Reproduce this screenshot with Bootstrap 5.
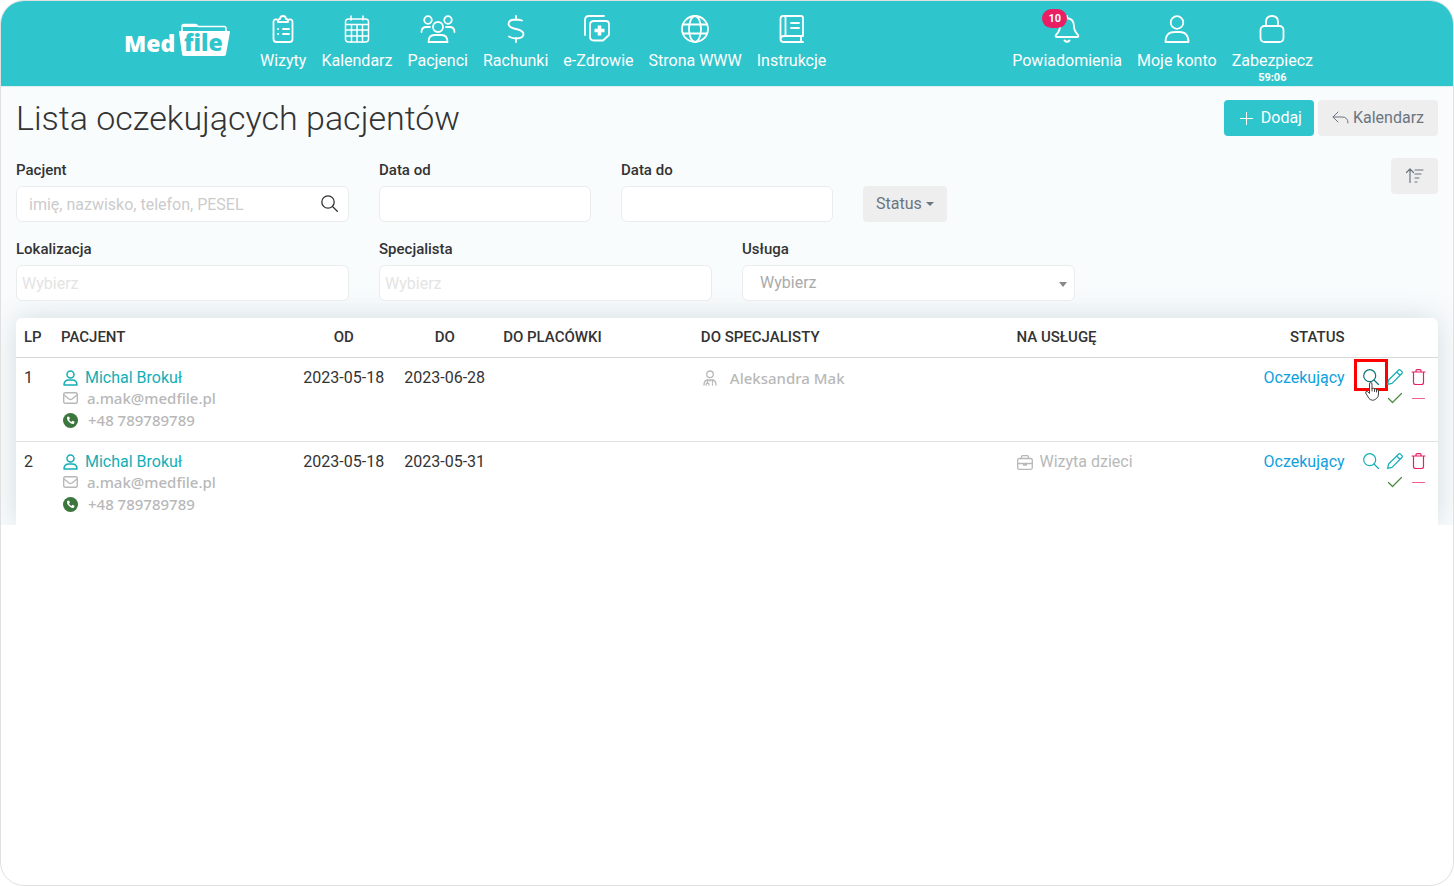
<!DOCTYPE html>
<html lang="pl">
<head>
<meta charset="utf-8">
<meta name="viewport" content="width=device-width, initial-scale=1">
<title>MedFile – Lista oczekujących pacjentów</title>
<link href="https://cdn.jsdelivr.net/npm/bootstrap@5.3.0/dist/css/bootstrap.min.css" rel="stylesheet">
<style>
  :root { --teal: #2fc5cd; --teal-dark: #14aeb6; }
  body { font-family: Roboto, "Liberation Sans", sans-serif; font-size: 16px; color: #333; background: #fff; }
  .frame { border: 1px solid #e0e0e0; border-radius: 24px; overflow: hidden; min-height: 100vh; background: #fff; }
  svg { fill: none; stroke: currentColor; stroke-linecap: round; stroke-linejoin: round; display: block; flex: none; }
  svg.solid { stroke: none; }

  .topbar { background: var(--teal); height: 85px; }
  .topbar-inner { max-width: 1206px; }
  .topbar .nav { column-gap: 15px; }
  .topbar .account { padding-right: 17px; }
  .topbar .nav-link { color: #fff; padding: 14px 0 0; line-height: 22px; text-align: center; position: relative; }
  .topbar .nav-link svg { width: 36px; height: 28px; margin: 0 auto 7px; stroke-width: 1.8; }
  .topbar .nav-link svg.fine { stroke-width: 1.5; }
  .brand { margin: 21px 30px 0 0; }
  .timer { font-size: 11px; font-weight: 700; line-height: 12px; }
  .count { position: absolute; left: 30px; top: 8px; width: 25px; height: 19px; line-height: 19px; font-size: 11px; font-weight: 700; padding: 0; background: #e91e63; border-radius: 10px; }

  .screen { background: #f9fcfd; border-top: 1px solid #e3eef0; padding-top: 13px; overflow: hidden; }
  .title-row { padding: 0 15px; margin-bottom: 22px; }
  h1 { font-size: 34px; font-weight: 300; line-height: 36px; margin: 0; color: #333; }
  .btn { font-size: 16px; height: 36px; border: 0; border-radius: 4px; display: inline-flex; align-items: center; }
  .btn-add { background: var(--teal) !important; color: #fff !important; padding: 0 12px 0 16px; gap: 8px; }
  .btn-soft { background: #eee !important; color: #6b7580 !important; padding: 0 14px; gap: 4px; }
  .btn-soft.dropdown-toggle { padding: 0 13px; }
  .filters { --bs-gutter-x: 30px; --bs-gutter-y: 15px; margin: -15px 0 0; }
  .form-label { font-size: 15px; font-weight: 500; line-height: 24px; margin: 0 0 4px; display: block; }
  .form-control, .form-select { height: 36px; font-size: 16px; border: 1px solid #eaeded; border-radius: 6px; padding: 0 12px; color: #aaa; background-color: #fff; }
  .form-control::placeholder { color: #ccc; opacity: 1; }
  .tags-box { padding: 0 5px; }
  .tags-box::placeholder { color: #e4e4e4; }
  .form-select { padding-left: 17px; background-image: none; }
  .select-caret, .find-icon { position: absolute; pointer-events: none; }
  .select-caret { right: 8px; top: 17px; border: 4px solid transparent; border-top: 5px solid #888; border-bottom: 0; }
  .find-icon { right: 11px; top: 9px; color: #333; }
  .btn.dropdown-toggle::after { border-width: 4px; border-bottom: 0; margin: 0; }

  .list-card { margin: 17px 15px 0; background: #fff; border-radius: 6px 6px 0 0; box-shadow: 0 0 30px rgba(60, 90, 100, .2); }
  .list-card table { table-layout: fixed; margin: 0; color: #333; --bs-table-bg: transparent; }
  .list-card th { font-size: 15px; font-weight: 500; line-height: 22px; padding: 8px 8px 9px; border-bottom: 1px solid #d8d8d8; white-space: nowrap; color: #333; }
  .list-card td { line-height: 24px; padding: 8px 8px 7px; border-bottom: 1px solid #e1e1e1; white-space: nowrap; color: #333; }
  .list-card tr:last-child td { border-bottom: 0; }
  .list-card a { text-decoration: none; color: var(--teal-dark); }
  .list-card .state { color: #109fe0; }
  .list-card .soft, .list-card a.soft { color: #b8b8b8; font-family: "Noto Sans", "Open Sans", sans-serif; font-size: 15px; font-weight: 500; }
  .list-card .soft-plain { color: #b8b8b8; }
  .contact { display: flex; align-items: center; gap: 7px; padding-left: 2px; height: 24px; }
  .contact.mail { height: 16px; gap: 9px; }
  .contact.phone { height: 28px; gap: 10px; }
  .contact.doctor { gap: 13px; }
  .contact.soft-plain { padding-left: 0; }
  .tools { display: grid; grid-template-columns: repeat(3, 16px); gap: 5px 8px; justify-content: end; padding: 3px 3px 0 0; }
  .tools button { border: 0; background: none; padding: 0; width: 16px; height: 16px; color: var(--teal-dark); position: relative; }
  .tools .danger { color: #e91e63; }
  .tools .accept { color: #4a8a3c; grid-column: 2; }
  .tools .pointed { color: #0d7377; }
  .marker { position: absolute; left: -9px; top: -10px; width: 34px; height: 32px; border: 3px solid #f00; }
  .hand { position: absolute; left: 2px; top: 13px; color: #444; }
</style>
</head>
<body>
<div class="frame">
  <header class="topbar">
    <nav class="topbar-inner mx-auto d-flex" aria-label="Główna nawigacja">
      <a class="brand" href="#" aria-label="MedFile">
        <svg class="solid" width="106" height="36" viewBox="0 0 106 36">
          <path d="M58 9V4.500q0-2 2-2h11q2 0 3 2h26q2 0 2 2v3" fill="none" stroke="#fff" stroke-width="1.500"/>
          <path d="M59 2h12l3 3H59z" fill="#fff"/>
          <path d="M55 9h50q1 0 1 1l-4 22q0 2-2 2H60q-2 0-2-2L55 10z" fill="#fff"/>
          <text x="0" y="30" fill="#fff" font-family="Open Sans" font-weight="800" font-size="23">Med</text>
          <text x="60" y="29" fill="#2fc5cd" font-family="Open Sans" font-weight="800" font-size="23">file</text>
        </svg>
      </a>
      <div class="nav flex-nowrap">
        <a class="nav-link" href="#"><svg viewBox="0 0 36 28"><path d="M11.500 4.500Q8.500 4 8.500 7v17q0 3 3 3h13q3 0 3-3V7q0-3-3-2.500M13 7V5.500q0-1.500 2-1.500 0-3 3-3t3 3q2 0 2 1.500V7zM18 14h6M18 19h6M13 14h.2M13 19h.2"/></svg>Wizyty</a>
        <a class="nav-link" href="#"><svg class="fine" viewBox="0 0 36 28"><rect x="6.500" y="4" width="23" height="23" rx="3"/><path d="M12 1v4M24 1v4M7 9.500h22M7 15h22M7 21h22M12.500 9.500V27M18 9.500V27M23.500 9.500V27"/></svg>Kalendarz</a>
        <a class="nav-link" href="#"><svg viewBox="0 0 36 28"><circle cx="18" cy="12" r="5"/><circle cx="8" cy="5" r="3.800"/><circle cx="28" cy="5" r="3.800"/><path d="M8.500 27q0-7 6-7h7q6 0 6 7zM1.500 17q0-5 5-5h3.500M34.500 17q0-5-5-5H26"/></svg>Pacjenci</a>
        <a class="nav-link" href="#"><svg viewBox="0 0 36 28"><path d="M18 1v4M18 23v4M24 5.500Q21 4.500 18 4.500c-5 0-7.500 2-7.500 4.500 0 3 3 4 7.500 5s7.500 2 7.500 5-3 4.500-7.500 4.500q-4 0-7-2"/></svg>Rachunki</a>
        <a class="nav-link" href="#"><svg viewBox="0 0 36 28"><path d="M5 20V5q0-4 4-4h15M14 6h12q3 0 3 3v11l-6 5.500h-9q-4 0-4-4V10q0-4 4-4z"/><path stroke-width="3.600" stroke-linecap="butt" d="M19.500 10.500v10M14.500 15.500h10"/></svg>e-Zdrowie</a>
        <a class="nav-link" href="#"><svg viewBox="0 0 36 28"><circle cx="18" cy="14" r="13"/><ellipse cx="18" cy="14" rx="6" ry="13"/><path d="M6 9.500h24M6 18.500h24"/></svg>Strona WWW</a>
        <a class="nav-link" href="#"><svg viewBox="0 0 36 28"><path d="M29 21V3q0-2-2-2H9Q6.500 1 6.500 4v20q0 3 3 3H29M29 21H10q-3 0-3.500 3M11.500 1v20M27 21v6M17 8h8M17 13h8"/></svg>Instrukcje</a>
      </div>
      <div class="nav account flex-nowrap ms-auto">
        <a class="nav-link" href="#"><svg viewBox="0 0 36 28"><path d="M18 1v2Q11 4 11 11q0 5-4 9-1 2 1 2h20q2 0 1-2-4-4-4-9 0-7-7-8M15.500 25.500q2.500 2.500 5 0"/></svg><span class="badge count">10</span>Powiadomienia</a>
        <a class="nav-link" href="#"><svg viewBox="0 0 36 28"><circle cx="18" cy="7.500" r="6.300"/><path d="M6.500 27q0-10 9-10h5q9 0 9 10z"/></svg>Moje konto</a>
        <a class="nav-link" href="#"><svg viewBox="0 0 36 28"><rect x="6.500" y="11" width="23" height="16" rx="4"/><path d="M12 11V7q0-6 6-6t6 6v4"/></svg>Zabezpiecz<div class="timer">59:06</div></a>
      </div>
    </nav>
  </header>

  <main class="screen">
    <div class="title-row d-flex justify-content-between align-items-start">
      <h1>Lista oczekujących pacjentów</h1>
      <div class="d-flex gap-1">
        <button type="button" class="btn btn-add"><svg width="13" height="13" viewBox="0 0 13 13"><path d="M6.500.500v12M.500 6.500h12"/></svg>Dodaj</button>
        <button type="button" class="btn btn-soft"><svg width="17" height="14" viewBox="0 0 17 14"><path d="M6 1 1 6l5 5M1 6h9q6 0 6 6"/></svg>Kalendarz</button>
      </div>
    </div>

    <form class="row filters">
      <div class="col-3">
        <label class="form-label" for="patient">Pacjent</label>
        <div class="position-relative">
          <input id="patient" class="form-control" type="text" placeholder="imię, nazwisko, telefon, PESEL">
          <svg class="find-icon" width="17" height="17" viewBox="0 0 17 17" stroke-width="1.300"><circle cx="7" cy="7" r="6.200"/><path d="m11.500 11.500 4.800 4.800"/></svg>
        </div>
      </div>
      <div class="col-2">
        <label class="form-label" for="from">Data od</label>
        <input id="from" class="form-control" type="text">
      </div>
      <div class="col-2">
        <label class="form-label" for="to">Data do</label>
        <input id="to" class="form-control" type="text">
      </div>
      <div class="col-3 d-flex align-items-end">
        <button type="button" class="btn btn-soft dropdown-toggle">Status</button>
      </div>
      <div class="col-2 d-flex justify-content-end align-items-start">
        <button type="button" class="btn btn-soft" aria-label="Sortuj"><svg width="19" height="16" viewBox="0 0 19 16" stroke-width="1.200"><path d="M5 14.500V1M1.500 4.500 5 1l3.500 3.500M10 2h8M10 6h6M10 10h4M10 14h2"/></svg></button>
      </div>
      <div class="col-3">
        <label class="form-label" for="place">Lokalizacja</label>
        <input id="place" class="form-control tags-box" type="text" placeholder="Wybierz">
      </div>
      <div class="col-3">
        <label class="form-label" for="doctor">Specjalista</label>
        <input id="doctor" class="form-control tags-box" type="text" placeholder="Wybierz">
      </div>
      <div class="col-3">
        <label class="form-label" for="service">Usługa</label>
        <div class="position-relative">
          <select id="service" class="form-select"><option>Wybierz</option></select>
          <span class="select-caret"></span>
        </div>
      </div>
    </form>

    <div class="list-card">
      <table class="table">
        <colgroup>
          <col style="width:2.6%"><col style="width:16.9%"><col style="width:7.1%"><col style="width:7.1%"><col style="width:13.9%"><col style="width:22.2%"><col style="width:14.9%"><col style="width:9.3%"><col style="width:6%">
        </colgroup>
        <thead>
          <tr><th>LP</th><th>PACJENT</th><th class="text-center">OD</th><th class="text-center">DO</th><th>DO PLACÓWKI</th><th>DO SPECJALISTY</th><th>NA USŁUGĘ</th><th class="text-end">STATUS</th><th></th></tr>
        </thead>
        <tbody>
          <tr>
            <td>1</td>
            <td>
              <div class="contact"><svg width="15" height="16" viewBox="0 0 15 16" stroke-width="1.500" color="#14aeb6"><circle cx="7.500" cy="4.500" r="3.500"/><path d="M1 15q0-5 5-5h3q5 0 5 5z"/></svg><a href="#">Michal Brokuł</a></div>
              <div class="contact mail soft"><svg width="15" height="12" viewBox="0 0 15 12" stroke-width="1.400"><rect x=".7" y=".7" width="13.600" height="10.600" rx="1.500"/><path d="m1 3 5 4q1.500 1 3 0l5-4"/></svg><a class="soft" href="#">a.mak@medfile.pl</a></div>
              <div class="contact phone soft"><svg class="solid" width="15" height="15" viewBox="0 0 15 15"><circle cx="7.500" cy="7.500" r="7.500" fill="#3b763c"/><path d="m4 4 2-.6 1 2.200-1 .9q.8 1.600 2.300 2.400l1-1.100 2.300 1-.6 2Q8.500 11.500 6 9T4 4z" fill="#fff"/></svg><span>+48 789789789</span></div>
            </td>
            <td class="text-center">2023-05-18</td>
            <td class="text-center">2023-06-28</td>
            <td></td>
            <td><div class="contact doctor soft"><svg width="14" height="16" viewBox="0 0 14 16" stroke-width="1.300"><circle cx="7" cy="4.300" r="3.300"/><path d="M1 15q0-5 4-5h4q4 0 4 5M4.500 10v2.500M3 15q0-2 1.500-2T6 15M9.500 10v3M9.500 15v-.5M7 10v1"/></svg><span>Aleksandra Mak</span></div></td>
            <td></td>
            <td class="text-end"><a href="#" class="state">Oczekujący</a></td>
            <td>
              <div class="tools">
                <button type="button" class="pointed" aria-label="Podgląd"><svg width="16" height="16" viewBox="0 0 16 16" stroke-width="1.200"><circle cx="6.700" cy="6.700" r="6"/><path d="m11 11 4.500 4.500"/></svg><span class="marker"></span><svg class="hand" width="14" height="19" viewBox="0 0 14 19"><path fill="#fff" d="M4.500 11V2q0-1.500 1.300-1.500T7 2v4.500q2-1 2.500.5 1.700-.7 2 .6 2-.4 2 1.400V12q0 3-2 4.500-4 3.500-7.500 0L.700 11q-.5-2 1.500-1.500z"/><path d="M7 6.500V9M9.500 7v2.500M11.500 7.500V10"/></svg></button>
                <button type="button" aria-label="Edytuj"><svg width="16" height="16" viewBox="0 0 16 16" stroke-width="1.200"><path d="m.600 15.400 1-4.400L11.500 1.200q1-1 2 0l1.300 1.300q1 1 0 2L5 14.400zM9.700 3l3.300 3.300"/></svg></button>
                <button type="button" class="danger" aria-label="Usuń"><svg width="16" height="16" viewBox="0 0 16 16" stroke-width="1.200"><path d="M1 3h13M5 3V1.500Q5 .6 6 .6h3q1 0 1 .9V3M2.500 3v10.500q0 2 2 2h6q2 0 2-2V3"/></svg></button>
                <button type="button" class="accept" aria-label="Zatwierdź"><svg width="16" height="16" viewBox="0 0 16 16" stroke-width="1.200"><path d="m1.500 8.500 4 4 9-9"/></svg></button>
                <button type="button" class="danger" aria-label="Odrzuć"><svg width="16" height="16" viewBox="0 0 16 16" stroke-width="1.200"><path opacity=".7" d="M1.500 8.500h12"/></svg></button>
              </div>
            </td>
          </tr>
          <tr>
            <td>2</td>
            <td>
              <div class="contact"><svg width="15" height="16" viewBox="0 0 15 16" stroke-width="1.500" color="#14aeb6"><circle cx="7.500" cy="4.500" r="3.500"/><path d="M1 15q0-5 5-5h3q5 0 5 5z"/></svg><a href="#">Michal Brokuł</a></div>
              <div class="contact mail soft"><svg width="15" height="12" viewBox="0 0 15 12" stroke-width="1.400"><rect x=".7" y=".7" width="13.600" height="10.600" rx="1.500"/><path d="m1 3 5 4q1.500 1 3 0l5-4"/></svg><a class="soft" href="#">a.mak@medfile.pl</a></div>
              <div class="contact phone soft"><svg class="solid" width="15" height="15" viewBox="0 0 15 15"><circle cx="7.500" cy="7.500" r="7.500" fill="#3b763c"/><path d="m4 4 2-.6 1 2.200-1 .9q.8 1.600 2.300 2.400l1-1.100 2.300 1-.6 2Q8.500 11.500 6 9T4 4z" fill="#fff"/></svg><span>+48 789789789</span></div>
            </td>
            <td class="text-center">2023-05-18</td>
            <td class="text-center">2023-05-31</td>
            <td></td>
            <td></td>
            <td><div class="contact soft-plain"><svg width="16" height="15" viewBox="0 0 16 15" stroke-width="1.300"><rect x=".7" y="3.500" width="14.600" height="10.800" rx="1.500"/><path d="M4.500 3.500V2q0-1.300 1.300-1.300h4.400q1.300 0 1.300 1.300v1.500M1 8.500h14M6.500 8.500v1.500h3V8.500"/></svg><span>Wizyta dzieci</span></div></td>
            <td class="text-end"><a href="#" class="state">Oczekujący</a></td>
            <td>
              <div class="tools">
                <button type="button" aria-label="Podgląd"><svg width="16" height="16" viewBox="0 0 16 16" stroke-width="1.200"><circle cx="6.700" cy="6.700" r="6"/><path d="m11 11 4.500 4.500"/></svg></button>
                <button type="button" aria-label="Edytuj"><svg width="16" height="16" viewBox="0 0 16 16" stroke-width="1.200"><path d="m.600 15.400 1-4.400L11.500 1.200q1-1 2 0l1.300 1.300q1 1 0 2L5 14.400zM9.700 3l3.300 3.300"/></svg></button>
                <button type="button" class="danger" aria-label="Usuń"><svg width="16" height="16" viewBox="0 0 16 16" stroke-width="1.200"><path d="M1 3h13M5 3V1.500Q5 .6 6 .6h3q1 0 1 .9V3M2.500 3v10.500q0 2 2 2h6q2 0 2-2V3"/></svg></button>
                <button type="button" class="accept" aria-label="Zatwierdź"><svg width="16" height="16" viewBox="0 0 16 16" stroke-width="1.200"><path d="m1.500 8.500 4 4 9-9"/></svg></button>
                <button type="button" class="danger" aria-label="Odrzuć"><svg width="16" height="16" viewBox="0 0 16 16" stroke-width="1.200"><path opacity=".7" d="M1.500 8.500h12"/></svg></button>
              </div>
            </td>
          </tr>
        </tbody>
      </table>
    </div>
  </main>
</div>
<script src="https://cdn.jsdelivr.net/npm/bootstrap@5.3.0/dist/js/bootstrap.bundle.min.js"></script>
</body>
</html>
